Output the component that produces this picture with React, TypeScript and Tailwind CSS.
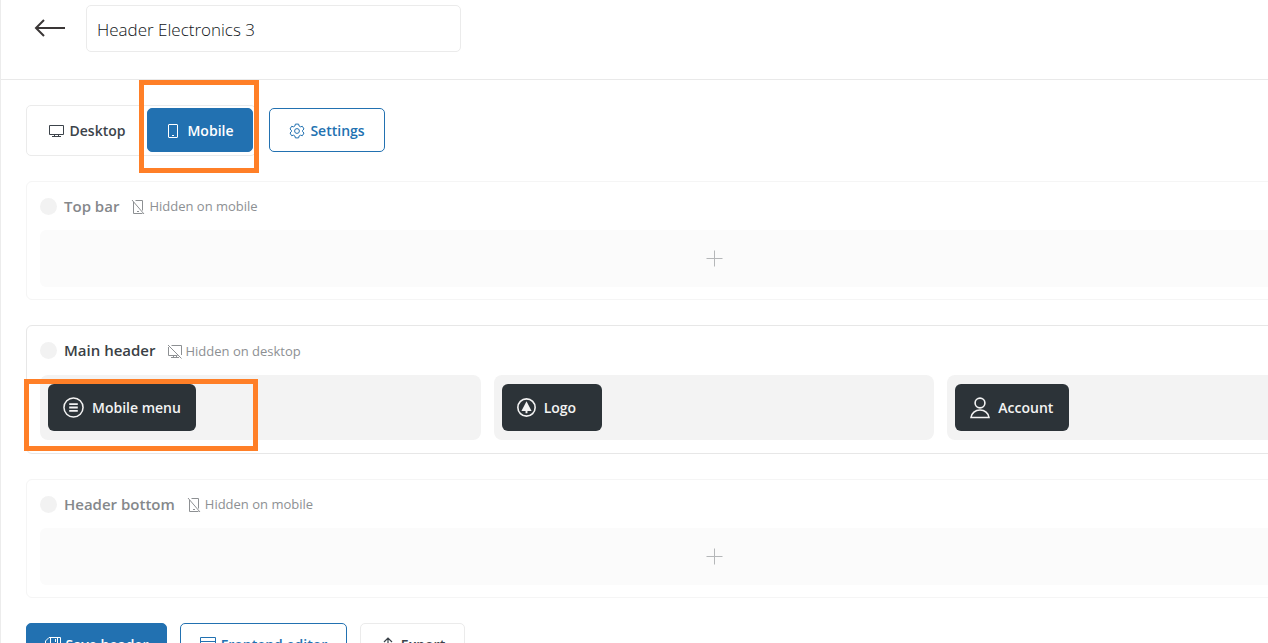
import type { ReactNode } from 'react';
import clsx from 'clsx';

interface IconProps {
  className?: string;
}

function ArrowLeftIcon({ className }: IconProps) {
  return (
    <svg viewBox="0 0 32 20" className={className} fill="none" stroke="currentColor" strokeWidth="2">
      <path d="M31 10H2M10 2L2 10l8 8" />
    </svg>
  );
}

function DesktopIcon({ className, hidden }: IconProps & { hidden?: boolean }) {
  return (
    <svg viewBox="0 0 16 16" className={className} fill="none" stroke="currentColor">
      {hidden ? (
        <path d="M4.500 1.500h10v9.500M1.500 3v8.500h9M6.500 11.500v2M9.500 11.500v2M4 13.500h8M1 1l13.500 13.500" />
      ) : (
        <path d="M.5 2.500h14v9H.5zM5.500 11.500v2M9.500 11.500v2M3 13.500h9" />
      )}
    </svg>
  );
}

function MobileIcon({ className, hidden }: IconProps & { hidden?: boolean }) {
  return (
    <svg viewBox="0 0 16 16" className={className} fill="none" stroke="currentColor">
      {hidden ? (
        <path d="M4.500 1.500h7v10M2.500 3v11.500h9M6 12.500h2M1 1l12 14" />
      ) : (
        <>
          <rect x="2.500" y="1.500" width="9" height="13" rx=".5" />
          <path d="M6 12.500h2" />
        </>
      )}
    </svg>
  );
}

function GearIcon({ className }: IconProps) {
  return (
    <svg viewBox="0 0 16 16" className={className} fill="none" stroke="currentColor" strokeLinejoin="round">
      <path d="M6.4 1.1h3.2l.5 1.9 1.4.8 1.9-.5 1.6 2.7L13.6 7.3v1.4l1.4 1.3-1.6 2.7-1.9-.5-1.4.8-.5 1.9H6.4L5.9 13l-1.4-.8-1.9.5L1 10l1.4-1.3V7.3L1 6l1.6-2.7 1.9.5L5.9 3z" />
      <circle cx="8" cy="8" r="2.4" />
    </svg>
  );
}

function MenuCircleIcon({ className }: IconProps) {
  return (
    <svg viewBox="0 0 22 22" className={className} fill="none" stroke="currentColor" strokeWidth="1.6">
      <circle cx="11" cy="11" r="10" />
      <path d="M6.500 7.500h9M6.500 11h9M6.500 14.500h9" strokeWidth="2" />
    </svg>
  );
}

function TreeCircleIcon({ className }: IconProps) {
  return (
    <svg viewBox="0 0 18 18" className={className} fill="none" stroke="currentColor" strokeWidth="1.5">
      <circle cx="9" cy="9" r="8.2" />
      <path d="M9 3l4.8 9.200h-3.900v2.300H8.100v-2.300H4.200z" fill="currentColor" stroke="none" />
    </svg>
  );
}

function UserIcon({ className }: IconProps) {
  return (
    <svg viewBox="0 0 20 22" className={className} fill="none" stroke="currentColor" strokeWidth="1.6">
      <circle cx="10" cy="6" r="4.900" />
      <path d="M1 20.500c.5-4.500 4.300-7.500 9-7.500s8.500 3 9 7.500z" />
    </svg>
  );
}

function SaveIcon({ className }: IconProps) {
  return (
    <svg viewBox="0 0 16 16" className={className} fill="none" stroke="currentColor">
      <path d="M4 .5h11.500v15H.5V4zM5.500.5v6h7v-6M10.500 2v3M4.500 15.500v-5h7v5" />
    </svg>
  );
}

function WindowIcon({ className }: IconProps) {
  return (
    <svg viewBox="0 0 16 16" className={className} fill="none" stroke="currentColor">
      <path d="M.5.5h15v14H.5zM.5 4.500h15" />
    </svg>
  );
}

function ExportIcon({ className }: IconProps) {
  return (
    <svg viewBox="0 0 16 16" className={className} fill="none" stroke="currentColor" strokeWidth="1.200">
      <path d="M8 12V1M4 5l4-4 4 4M1.500 11v3.500h13V11" />
    </svg>
  );
}

function PlusIcon({ className }: IconProps) {
  return (
    <svg viewBox="0 0 17 17" className={className} fill="none" stroke="currentColor">
      <path d="M8.500.5v16M.5 8.500h16" />
    </svg>
  );
}

interface HeaderRowProps {
  title: string;
  hiddenOn: 'mobile' | 'desktop';
  muted?: boolean;
  children?: ReactNode;
}

function HeaderRow({ title, hiddenOn, muted, children }: HeaderRowProps) {
  const Device = hiddenOn === 'mobile' ? MobileIcon : DesktopIcon;

  return (
    <section
      className={clsx(
        'rounded-md border px-[13px]',
        muted ? 'border-[#f5f5f5] pb-3' : 'border-[#e7e7e7] pb-[13px]'
      )}
    >
      <div className={clsx('flex items-center', muted ? 'h-12' : 'h-[49px]')}>
        <span className="h-[17px] w-[17px] rounded-full bg-[#f2f2f2]" />
        <h2
          className={clsx(
            'ml-[7px] text-[15px] font-semibold',
            muted ? 'text-[#85888b]' : 'text-[#3a3f45]'
          )}
        >
          {title}
        </h2>
        <p className="ml-3 flex items-center gap-[2px] pt-[2px] text-[13px] text-[#8d9093]">
          <Device hidden className="h-4 w-4" />
          Hidden on {hiddenOn}
        </p>
      </div>
      {children ?? (
        <button
          type="button"
          aria-label={`Add element to ${title}`}
          className="flex h-[57px] w-full items-center justify-center rounded-md bg-[#fbfbfb] text-[#b5b7b9]"
        >
          <PlusIcon className="h-[17px] w-[17px]" />
        </button>
      )}
    </section>
  );
}

interface ElementProps {
  icon: ReactNode;
  label: string;
  className: string;
  marked?: boolean;
}

function HeaderColumn({ icon, label, className, marked }: ElementProps) {
  return (
    <div className="relative rounded-lg bg-[#f3f3f3] px-2 py-[9px]">
      <button
        type="button"
        className={clsx(
          'flex h-[47px] items-center gap-2 rounded-md bg-[#2c3338] px-[15px] text-sm font-semibold whitespace-nowrap text-[#f3f3f3]',
          className
        )}
      >
        {icon}
        {label}
      </button>
      {marked && (
        <span className="pointer-events-none absolute top-1 -left-4 h-[72px] w-[234px] border-5 border-[#ff7f27]" />
      )}
    </div>
  );
}

const button = 'flex h-11 items-center justify-center gap-[5px] rounded-[5px] border text-sm font-semibold';

export default function App() {
  return (
    <div className="h-screen overflow-hidden border-l border-[#ececec] bg-white font-['Open_Sans',sans-serif] text-[#3c434a]">
      <header className="flex h-20 items-start border-b border-[#e9e9e9] pt-[5px] pl-[33px]">
        <a href="#headers" aria-label="Back to headers" className="mt-[13px] text-[#3a3636]">
          <ArrowLeftIcon className="h-5 w-8" />
        </a>
        <input
          type="text"
          aria-label="Header name"
          defaultValue="Header Electronics 3"
          className="ml-5 h-[47px] w-[375px] rounded-[5px] border border-[#ebebeb] px-[10px] pt-[2px] text-[17px] font-light text-[#101418]"
        />
      </header>

      <main className="min-w-[1426px] p-[25px]">
        <div className="flex items-start">
          <div className="flex h-[51px] items-start rounded-[5px] border border-[#ebebeb] pt-[2px] pr-[2px]">
            <button type="button" className={clsx(button, 'w-[120px] border-transparent pt-[2px]')}>
              <DesktopIcon className="h-4 w-4" />
              Desktop
            </button>
            <div className="relative">
              <button type="button" className={clsx(button, 'w-[106px] border-[#2271b1] bg-[#2271b1] pt-[2px] text-white')}>
                <MobileIcon className="h-4 w-4" />
                Mobile
              </button>
              <span className="pointer-events-none absolute -top-7 -right-[6px] -bottom-[21px] -left-2 border-5 border-[#ff7f27]" />
            </div>
          </div>
          <button type="button" className={clsx(button, 'mt-[3px] ml-[13px] w-[116px] border-[#2271b1] pt-[2px] text-[#2271b1]')}>
            <GearIcon className="h-4 w-4" />
            Settings
          </button>
        </div>

        <div className="mt-[25px] flex flex-col gap-[25px]">
          <HeaderRow title="Top bar" hiddenOn="mobile" muted />
          <HeaderRow title="Main header" hiddenOn="desktop">
            <div className="grid grid-cols-3 gap-[13px]">
              <HeaderColumn icon={<MenuCircleIcon className="h-[21px] w-[21px]" />} label="Mobile menu" className="w-[148px]" marked />
              <HeaderColumn icon={<TreeCircleIcon className="h-[19px] w-[19px]" />} label="Logo" className="w-[100px]" />
              <HeaderColumn icon={<UserIcon className="h-[22px] w-5" />} label="Account" className="w-[114px]" />
            </div>
          </HeaderRow>
          <HeaderRow title="Header bottom" hiddenOn="mobile" muted />
        </div>

        <div className="mt-[25px] flex gap-[13px]">
          <button type="button" className={clsx(button, 'w-[141px] border-[#2271b1] bg-[#2271b1] text-white')}>
            <SaveIcon className="h-4 w-4" />
            Save header
          </button>
          <button type="button" className={clsx(button, 'w-[167px] border-[#2271b1] text-[#2271b1]')}>
            <WindowIcon className="h-4 w-4" />
            Frontend editor
          </button>
          <button type="button" className={clsx(button, 'w-[105px] border-[#ebebeb]')}>
            <ExportIcon className="h-4 w-4" />
            Export
          </button>
        </div>
      </main>
    </div>
  );
}
